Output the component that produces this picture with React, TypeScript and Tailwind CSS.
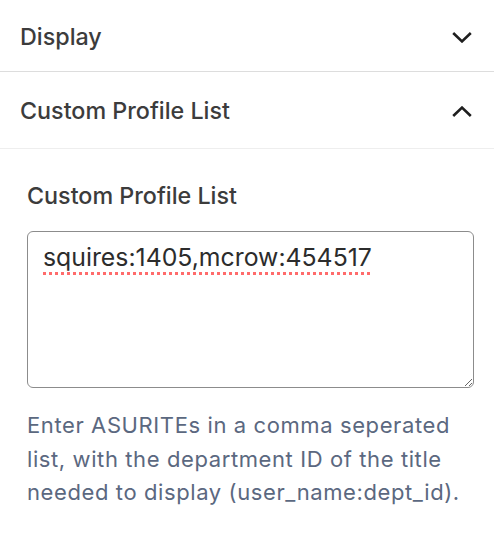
const font = { fontFamily: "Inter, 'Noto Sans', sans-serif" };

const Chevron = ({ up }: { up: boolean }) => (
  <svg width="20" height="11" viewBox="0 0 20 11" fill="none" className="shrink-0">
    <path
      d={up ? "M1.2 10 L10 1.6 L18.8 10" : "M1.2 1 L10 9.4 L18.8 1"}
      stroke="#1e1e1e"
      strokeWidth="2.6"
      strokeLinejoin="miter"
    />
  </svg>
);

const PanelHeader = ({ title, open }: { title: string; open: boolean }) => (
  <button
    type="button"
    className="flex w-full items-center justify-between pl-5 pr-[22px] pt-[3px] text-left text-[23.3px] font-medium text-[#3c3c3c]"
  >
    <span>{title}</span>
    <Chevron up={open} />
  </button>
);

export default function App() {
  return (
    <div className="h-[538px] w-[498px] bg-white" style={font}>
      <div className="w-[494px]">
        <div className="flex h-[72px] items-center border-b border-[#dddddd]">
          <PanelHeader title="Display" open={false} />
        </div>
        <div className="flex h-[77px] items-center border-b border-[#eeeeee]">
          <PanelHeader title="Custom Profile List" open />
        </div>
        <div className="pl-[27px] pt-[31px]">
          <label className="block text-[23.3px] font-medium leading-[32px] text-[#3c3c3c]">
            Custom Profile List
          </label>
          <textarea
            className="mt-[19px] block h-[157px] w-[447px] resize-y rounded-[6px] border border-[#8c8c8c] px-[15px] py-[9px] text-[24.8px] leading-[32px] text-[#2c2c2c] underline decoration-[#ff6b6b] decoration-dotted decoration-[3px] underline-offset-[6px] outline-none"
            defaultValue="squires:1405,mcrow:454517"
            spellCheck
          />
          <p className="mt-[21px] w-[447px] text-[22px] leading-[33.5px] tracking-[0.6px] text-[#5b6880]">
            Enter ASURITEs in a comma seperated list, with the department ID of the title needed to display (user_name:dept_id).
          </p>
        </div>
      </div>
    </div>
  );
}
